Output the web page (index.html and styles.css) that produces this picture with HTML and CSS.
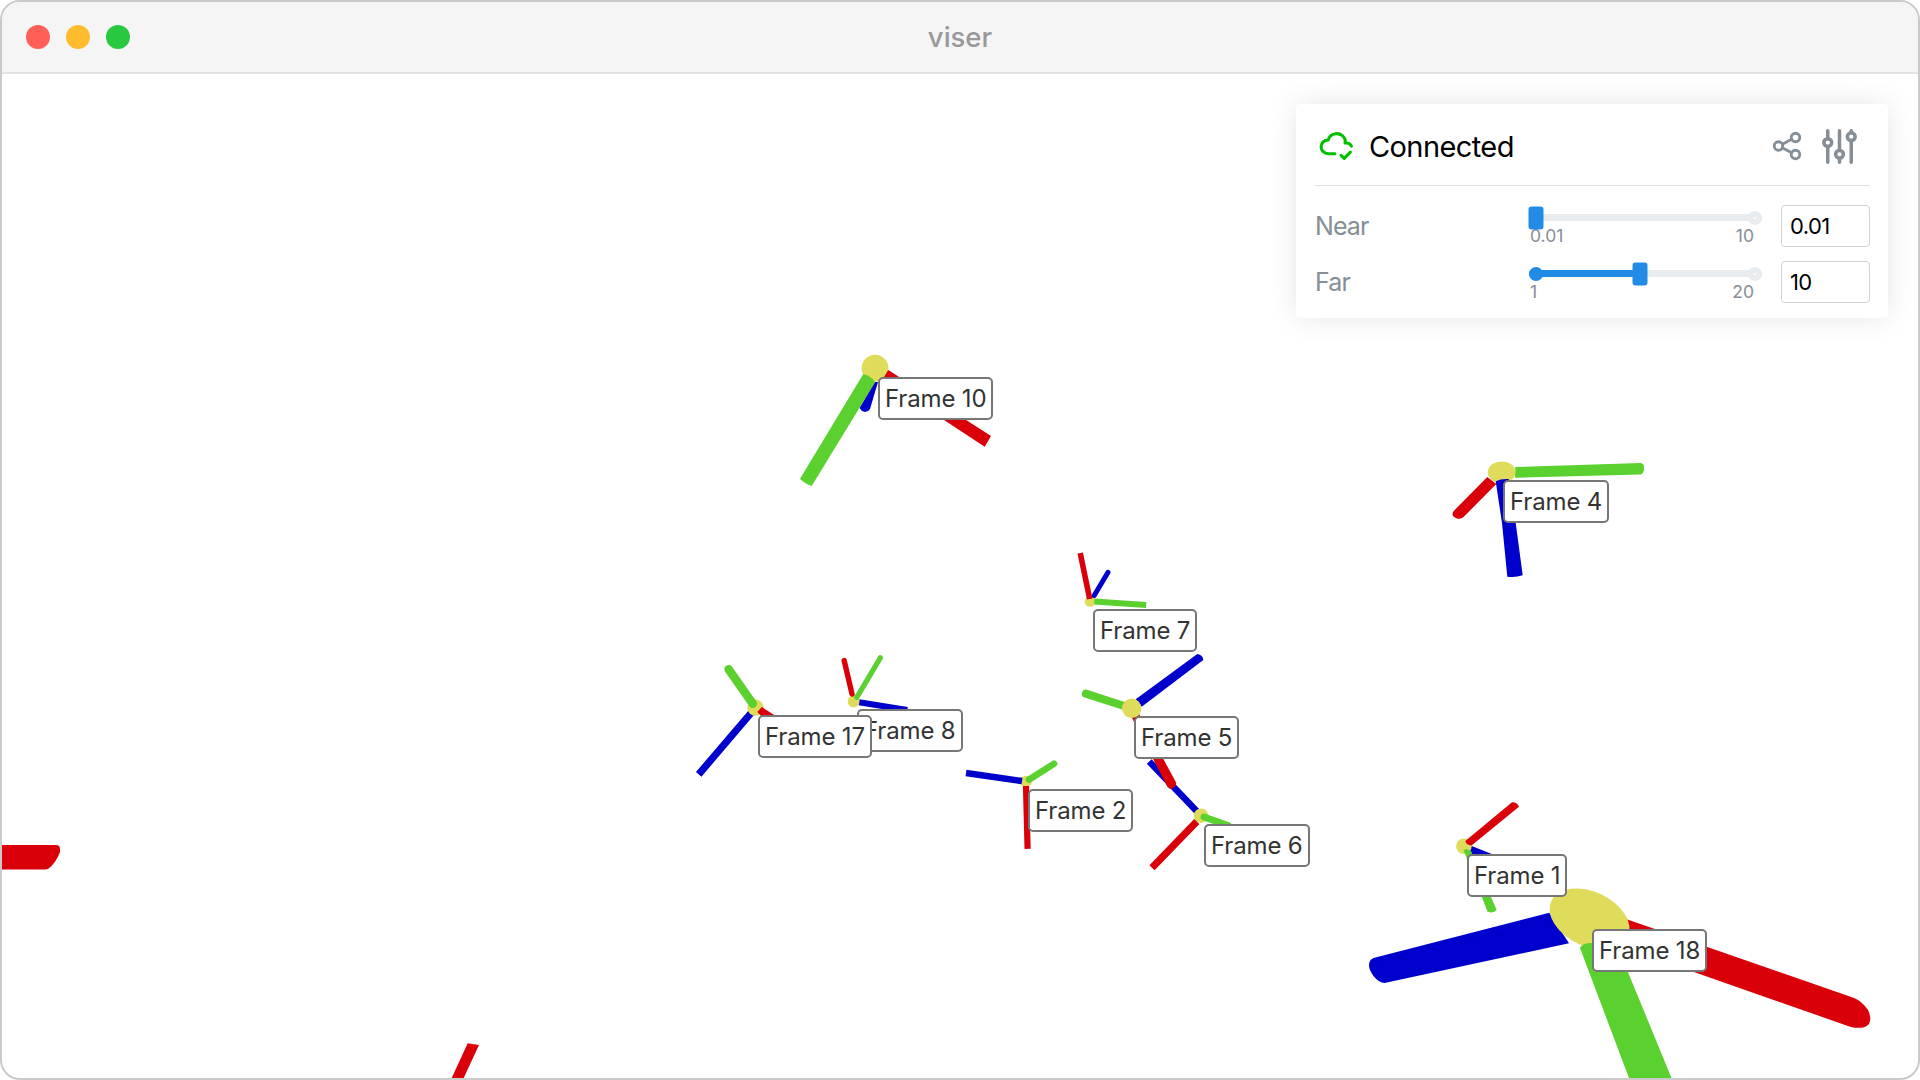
FILE: index.html
```html
<!DOCTYPE html>
<html lang="en">
<head>
<meta charset="utf-8">
<title>viser</title>
<link rel="stylesheet" href="styles.css">
</head>
<body>
<div class="window">
  <header class="titlebar">
    <div class="lights"><span class="light close"></span><span class="light minimize"></span><span class="light maximize"></span></div>
    <div class="title">viser</div>
  </header>
  <main class="viewport">
    <svg class="scene" viewBox="2 74 1916 1004" width="1916" height="1004">
      <!-- partly visible frames -->
      <path class="x" d="M2 845H56Q60 845 60 849V852Q56 863 48 869L45 869.5H2Z"/>
      <path class="x" d="M467.7 1043.3L479 1045L463.7 1078H451.7Z"/>
      <!-- frame 10 -->
      <path class="z" d="M874.7 382L878 382L870 409Q868 412 865 412Q861 411 859.5 408Z"/>
      <circle class="o" cx="875" cy="368.2" r="13.4"/>
      <path class="x" d="M888.3 370L991 436L984.7 446.7L884 380.5V377Z"/>
      <path class="y" d="M863.3 374Q871 376 875.3 382L811.7 486Q805 484 800 478.7Z"/>
      <!-- frame 4 -->
      <path class="x" d="M1487.3 477L1496.3 484L1463.3 517.3Q1459 520 1456 518Q1450 515 1454 510.7Z"/>
      <ellipse class="o" cx="1501.7" cy="472.3" rx="13.9" ry="10.9"/>
      <path class="y" d="M1515 467L1640.7 463Q1644 463.5 1644 467V470Q1643 474.3 1640 474.5L1514.7 477.7Q1516 472 1515 467Z"/>
      <path class="z" d="M1495.7 481.3Q1501 478.5 1508.7 479L1515.7 523L1522.7 575.3Q1515 578 1507.3 576.7L1502 523Z"/>
      <!-- frame 7 -->
      <circle class="o" cx="1090" cy="601.5" r="5.3"/>
      <path class="z round" stroke-width="5" d="M1108 572.3L1094.2 595.5"/>
      <path class="x line" stroke-width="5.6" d="M1080.2 553L1089.7 599"/>
      <path class="y line" stroke-width="6" d="M1094.3 601.6L1146.2 605"/>
      <!-- frame 8 -->
      <path class="z line" stroke-width="6" d="M859 702.2L907.3 710"/>
      <circle class="o" cx="853.6" cy="701.5" r="5.9"/>
      <path class="x round" stroke-width="5.4" d="M844.2 660.6L852 694"/>
      <path class="y round" stroke-width="5.2" d="M880.3 657.8L856.8 697.4"/>
      <!-- frame 17 -->
      <path class="z line" stroke-width="7.2" d="M751.5 712.5L698.7 774.3"/>
      <circle class="o" cx="755.5" cy="707.7" r="8.2"/>
      <path class="y round" stroke-width="8.5" d="M728.6 669.2L752.8 703.8"/>
      <path class="x" d="M757.3 712L761.8 707L775 715.5V719H764Z"/>
      <!-- frame 2 -->
      <circle class="o" cx="1026" cy="781.5" r="5.8"/>
      <path class="z line" stroke-width="6.4" d="M966 773L1022 781"/>
      <path class="y round" stroke-width="6.6" d="M1054 763.8L1029 779.6"/>
      <path class="x line" stroke-width="6.2" d="M1026 786L1027.6 848.8"/>
      <!-- frame 6 -->
      <path class="z line" stroke-width="6.6" d="M1149.2 761.5L1198 812.5"/>
      <circle class="o" cx="1201" cy="815.7" r="7.2"/>
      <path class="x line" stroke-width="7.2" d="M1196.8 821.5L1152 867.7"/>
      <path class="y round" stroke-width="7" d="M1204 817L1228 825.5"/>
      <!-- frame 5 -->
      <path class="x" d="M1131 716L1138 712L1176.3 783Q1176 788 1170 789L1167.5 787Z"/>
      <path class="z" d="M1135.7 699.3L1197.3 654Q1203 655 1203.3 660L1141.7 706.7Z"/>
      <path class="y round" stroke-width="8" d="M1085.8 693.6L1125 706.2"/>
      <circle class="o" cx="1131.7" cy="708.3" r="9.7"/>
      <!-- frame 1 -->
      <path class="z" d="M1468 844.5L1493 854.5V858H1470Z"/>
      <circle class="o" cx="1463.9" cy="846.2" r="7.8"/>
      <path class="x" d="M1512 802.3Q1517 802 1519 806.7L1471.5 845.5Q1466 845 1465.3 841Z"/>
      <path class="y" d="M1463.5 850Q1467 848 1471 851L1496.7 910Q1493 914 1487.5 911.5Z"/>
      <!-- frame 18 -->
      <path class="z" d="M1549.2 912.7L1569 943.3L1384.5 983Q1379 983 1373.5 976Q1369 970 1369 965Q1369 960 1373.5 958Z"/>
      <path class="x" d="M1620 917L1708 947.3L1853.5 997.7Q1862 1001 1868 1010Q1872 1018 1869 1024Q1864 1030 1850 1026.7L1620 946Z"/>
      <ellipse class="o" cx="1589.6" cy="919" rx="42.3" ry="27.3" transform="rotate(25 1589.6 919)"/>
      <path class="y" d="M1580 948Q1582 943 1592 943H1616L1671.5 1078H1629Z"/>
    </svg>
    <div class="tag f10">Frame 10</div>
    <div class="tag f4">Frame 4</div>
    <div class="tag f7">Frame 7</div>
    <div class="tag f8">Frame 8</div>
    <div class="tag f17">Frame 17</div>
    <div class="tag f2">Frame 2</div>
    <div class="tag f6">Frame 6</div>
    <div class="tag f5">Frame 5</div>
    <div class="tag f1">Frame 1</div>
    <div class="tag f18">Frame 18</div>

    <aside class="panel">
      <div class="status">
        <svg class="icon cloud" viewBox="0 0 24 24"><path d="M11 18.004h-4.343c-2.572 -.004 -4.657 -2.011 -4.657 -4.487c0 -2.475 2.085 -4.482 4.657 -4.482c.393 -1.762 1.794 -3.2 3.675 -3.773c1.88 -.572 3.956 -.193 5.444 1c1.488 1.19 2.162 3.007 1.77 4.769h.99c1.388 0 2.585 .82 3.138 2.007M15 19l2 2l4 -4"/></svg>
        <div class="status-text">Connected</div>
        <svg class="icon share" viewBox="0 0 24 24"><circle cx="6" cy="12" r="3"/><circle cx="18" cy="6" r="3"/><circle cx="18" cy="18" r="3"/><path d="M8.7 10.7l6.6 -3.4M8.7 13.3l6.6 3.4"/></svg>
        <svg class="icon adjust" viewBox="0 0 24 24"><circle cx="6" cy="10" r="2"/><circle cx="12" cy="16" r="2"/><circle cx="18" cy="7" r="2"/><path d="M6 4v4M6 12v8M12 4v10M12 18v2M18 4v1M18 9v11"/></svg>
      </div>
      <div class="controls">
        <div class="row">
          <label class="name" for="near">Near</label>
          <div class="slider">
            <div class="track"><span class="mark end"></span><span class="thumb" style="left:7px"></span></div>
            <div class="limits"><span>0.01</span><span>10</span></div>
          </div>
          <input class="value" id="near" type="text" value="0.01">
        </div>
        <div class="row">
          <label class="name" for="far">Far</label>
          <div class="slider">
            <div class="track"><span class="fill" style="width:111px"></span><span class="mark start"></span><span class="mark end"></span><span class="thumb" style="left:111px"></span></div>
            <div class="limits"><span>1</span><span>20</span></div>
          </div>
          <input class="value" id="far" type="text" value="10">
        </div>
      </div>
    </aside>
  </main>
</div>
</body>
</html>
```
FILE: styles.css
```css
* { box-sizing: border-box; }
body { margin: 0; background: #fff; font-family: Inter, "Liberation Sans", sans-serif; }

.window {
  width: 1920px;
  height: 1080px;
  display: flex;
  flex-direction: column;
  border: 2px solid #cacaca;
  border-radius: 20px;
  overflow: hidden;
  background: #fff;
}
.titlebar {
  flex: none;
  height: 72px;
  display: grid;
  grid-template-columns: 1fr auto 1fr;
  align-items: center;
  padding: 0 24px;
  background: #f5f5f5;
  border-bottom: 2px solid #e2e2e2;
}
.lights { display: flex; gap: 16px; }
.light { width: 24px; height: 24px; border-radius: 50%; }
.close { background: #ff5f57; }
.minimize { background: #ffbc2e; }
.maximize { background: #28c840; }
.title { color: #999; font-size: 27.5px; font-weight: 500; line-height: 32px; }

.viewport { position: relative; flex: 1; min-height: 0; display: flex; justify-content: flex-end; align-items: flex-start; padding: 30px; }
.scene { position: absolute; inset: 0; }
.x { fill: #d9000a; }
.y { fill: #5bd12f; }
.z { fill: #0000cc; }
.o { fill: #dfdc5c; }
.line, .round { fill: none; }
.round { stroke-linecap: round; }
.x.line, .x.round { stroke: #d9000a; }
.y.line, .y.round { stroke: #5bd12f; }
.z.line, .z.round { stroke: #0000cc; }

.tag {
  position: absolute;
  height: 43px;
  padding: 0 5px;
  border: 2px solid #777;
  border-radius: 5px;
  background: #fff;
  color: #333;
  font-size: 24px;
  line-height: 39px;
  letter-spacing: -0.15px;
  white-space: nowrap;
}
.f10 { left: 876px; top: 303px; }
.f4 { left: 1501px; top: 406px; }
.f7 { left: 1091px; top: 535px; }
.f8 { left: 855px; top: 635px; }
.f17 { left: 756px; top: 641px; }
.f2 { left: 1026px; top: 715px; }
.f6 { left: 1202px; top: 750px; }
.f5 { left: 1132px; top: 642px; }
.f1 { left: 1465px; top: 780px; }
.f18 { left: 1590px; top: 855px; }

.panel {
  position: relative;
  width: 592px;
  height: 214px;
  padding: 0 18px 0 19px;
  border-radius: 4px;
  background: #fff;
  box-shadow: 0 0 28px rgba(0, 0, 0, 0.1);
}
.status {
  height: 82px;
  display: flex;
  align-items: center;
  padding: 3px 7px 0 3px;
  border-bottom: 1px solid #dee2e6;
}
.icon { flex: none; fill: none; stroke: #868e96; stroke-width: 2; stroke-linecap: round; stroke-linejoin: round; }
.cloud { width: 37px; height: 37px; margin-top: -3px; stroke: #00c000; }
.status-text { flex: 1; padding: 2px 0 0 14px; font-size: 29px; line-height: 40px; letter-spacing: -0.6px; color: #000; }
.share { width: 34px; height: 34px; }
.adjust { width: 47px; height: 47px; margin-left: 12px; stroke-width: 1.8; }

.controls { display: flex; flex-direction: column; gap: 14px; padding-top: 19px; }
.row { display: grid; grid-template-columns: 214px 233px 1fr; align-items: start; height: 42px; }
.name { color: #868e96; font-size: 25px; line-height: 42px; letter-spacing: -0.9px; }
.slider { display: flex; flex-direction: column; padding-top: 9px; }
.track { position: relative; height: 7px; border-radius: 4px; background: #e9ecef; }
.fill { position: absolute; left: 0; top: 0; height: 100%; border-radius: 4px; background: #228be6; }
.mark { position: absolute; top: -3.5px; width: 14px; height: 14px; border-radius: 50%; }
.mark.start { left: 0; background: #228be6; }
.mark.end { right: 0; border: 6px solid #e9ecef; background: #fff; }
.thumb { position: absolute; top: 50%; width: 15px; height: 23px; border-radius: 3px; background: #228be6; transform: translate(-50%, -50%); }
.limits { display: flex; justify-content: space-between; padding: 4px 8px 0 1px; color: #868e96; font-size: 17.5px; line-height: 22px; }
.value {
  justify-self: end;
  width: 89px;
  height: 42px;
  padding: 0 8px;
  border: 1px solid #ced4da;
  border-radius: 4px;
  background: #fff;
  color: #000;
  font-family: inherit;
  font-size: 22px;
  letter-spacing: -0.6px;
}
```
